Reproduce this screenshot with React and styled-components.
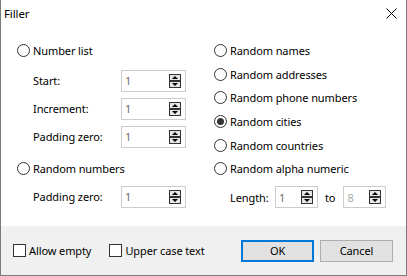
import React from 'react';
import styled, { createGlobalStyle } from 'styled-components';

const Global = createGlobalStyle`
  html, body { margin: 0; padding: 0; background: #fff; }
  body {
    font-family: "Noto Sans", "Liberation Sans", sans-serif;
    font-size: 11px;
    letter-spacing: -0.1px;
    color: #000;
  }
`;

const Dialog = styled.div`
  width: 407px;
  height: 276px;
  box-sizing: border-box;
  border: 1px solid #7a7a7a;
  border-top: none;
  display: flex;
  flex-direction: column;
  background: #fff;
`;

const TitleBar = styled.div`
  height: 26px;
  display: flex;
  align-items: center;
  justify-content: space-between;
  padding-left: 3px;
`;

const Title = styled.span`
  font-size: 11.5px;
`;

const CloseBox = styled.div`
  width: 30px;
  height: 26px;
  display: flex;
  align-items: center;
  justify-content: center;
`;

const Content = styled.div`
  flex: 1;
  display: flex;
  padding: 13px 0 0 16px;
`;

const Column = styled.div`
  width: ${p => p.$w}px;
  display: flex;
  flex-direction: column;
`;

const RadioRow = styled.label`
  height: ${p => p.$h || 23.6}px;
  display: flex;
  align-items: center;
  gap: 3px;
  white-space: nowrap;
`;

const RadioCircle = styled.span`
  width: 13px;
  height: 13px;
  box-sizing: border-box;
  border: 1px solid #333;
  border-radius: 50%;
  background: #fff;
  display: flex;
  align-items: center;
  justify-content: center;
  flex: none;
  &::after {
    content: '';
    width: 7px;
    height: 7px;
    border-radius: 50%;
    background: ${p => (p.$checked ? '#333' : 'transparent')};
  }
`;

const SubList = styled.div`
  display: flex;
  flex-direction: column;
  gap: ${p => p.$gap || 6}px;
  margin-top: ${p => p.$mt || 0}px;
  margin-bottom: ${p => p.$mb || 0}px;
  padding-left: 16px;
`;

const FieldRow = styled.div`
  display: flex;
  align-items: center;
  height: 22px;
  white-space: nowrap;
`;

const FieldLabel = styled.span`
  width: ${p => p.$w}px;
  flex: none;
`;

const SpinBox = styled.div`
  width: ${p => p.$w}px;
  height: 22px;
  box-sizing: border-box;
  border: 1px solid #cccccc;
  background: #fff;
  display: flex;
  align-items: center;
  justify-content: space-between;
  padding: 0 4px 0 3px;
  flex: none;
`;

const SpinValue = styled.span`
  color: ${p => (p.$light ? '#a8a8a8' : '#6d6d6d')};
`;

const ToLabel = styled.span`
  margin: 0 8px 0 7px;
`;

const Footer = styled.div`
  height: 49px;
  background: #f0f0f0;
  display: flex;
  align-items: center;
  padding: 0 13px 0 12px;
`;

const CheckGroup = styled.label`
  display: flex;
  align-items: center;
  gap: 3px;
  margin-right: ${p => p.$mr || 0}px;
  white-space: nowrap;
`;

const CheckBox = styled.span`
  width: 13px;
  height: 13px;
  box-sizing: border-box;
  border: 1px solid #333;
  background: #fff;
  flex: none;
`;

const Spacer = styled.div`
  flex: 1;
`;

const Button = styled.button`
  width: 73px;
  height: 22px;
  box-sizing: border-box;
  font-family: inherit;
  font-size: 11px;
  letter-spacing: -0.1px;
  color: #000;
  background: #e1e1e1;
  border: ${p => (p.$primary ? '2px solid #0078d7' : '1px solid #adadad')};
  margin-left: ${p => p.$ml || 0}px;
  padding: 0;
`;

const SpinArrows = () => (
  <svg width="12" height="14" viewBox="0 0 12 14">
    <rect x="0.5" y="0.5" width="11" height="6" fill="#e5e5e5" stroke="#333" />
    <rect x="0.5" y="7.5" width="11" height="6" fill="#e5e5e5" stroke="#333" />
    <path d="M3 5 L6 2 L9 5 Z" fill="#000" />
    <path d="M3 9 L6 12 L9 9 Z" fill="#000" />
  </svg>
);

const Spinner = ({ value, w = 65, light }) => (
  <SpinBox $w={w}>
    <SpinValue $light={light}>{value}</SpinValue>
    <SpinArrows />
  </SpinBox>
);

const Radio = ({ label, checked, h }) => (
  <RadioRow $h={h}>
    <RadioCircle $checked={checked} />
    <span>{label}</span>
  </RadioRow>
);

export default function App() {
  return (
    <>
      <Global />
      <Dialog>
        <TitleBar>
          <Title>Filler</Title>
          <CloseBox>
            <svg width="11" height="11" viewBox="0 0 11 11">
              <path d="M0.5 0.5 L10.5 10.5 M10.5 0.5 L0.5 10.5" stroke="#000" strokeWidth="1" />
            </svg>
          </CloseBox>
        </TitleBar>
        <Content>
          <Column $w={197}>
            <Radio label="Number list" />
            <SubList $mt={7.4} $mb={9}>
              <FieldRow>
                <FieldLabel $w={88}>Start:</FieldLabel>
                <Spinner value="1" />
              </FieldRow>
              <FieldRow>
                <FieldLabel $w={88}>Increment:</FieldLabel>
                <Spinner value="1" />
              </FieldRow>
              <FieldRow>
                <FieldLabel $w={88}>Padding zero:</FieldLabel>
                <Spinner value="1" />
              </FieldRow>
            </SubList>
            <Radio label="Random numbers" h={24} />
            <SubList $mt={5}>
              <FieldRow>
                <FieldLabel $w={88}>Padding zero:</FieldLabel>
                <Spinner value="1" />
              </FieldRow>
            </SubList>
          </Column>
          <Column $w={180}>
            <Radio label="Random names" />
            <Radio label="Random addresses" />
            <Radio label="Random phone numbers" />
            <Radio label="Random cities" checked />
            <Radio label="Random countries" />
            <Radio label="Random alpha numeric" />
            <SubList $mt={5.5}>
              <FieldRow>
                <FieldLabel $w={45}>Length:</FieldLabel>
                <Spinner value="1" w={43} />
                <ToLabel>to</ToLabel>
                <Spinner value="8" w={43} light />
              </FieldRow>
            </SubList>
          </Column>
        </Content>
        <Footer>
          <CheckGroup $mr={18}>
            <CheckBox />
            <span>Allow empty</span>
          </CheckGroup>
          <CheckGroup>
            <CheckBox />
            <span>Upper case text</span>
          </CheckGroup>
          <Spacer />
          <Button $primary>OK</Button>
          <Button $ml={6}>Cancel</Button>
        </Footer>
      </Dialog>
    </>
  );
}
